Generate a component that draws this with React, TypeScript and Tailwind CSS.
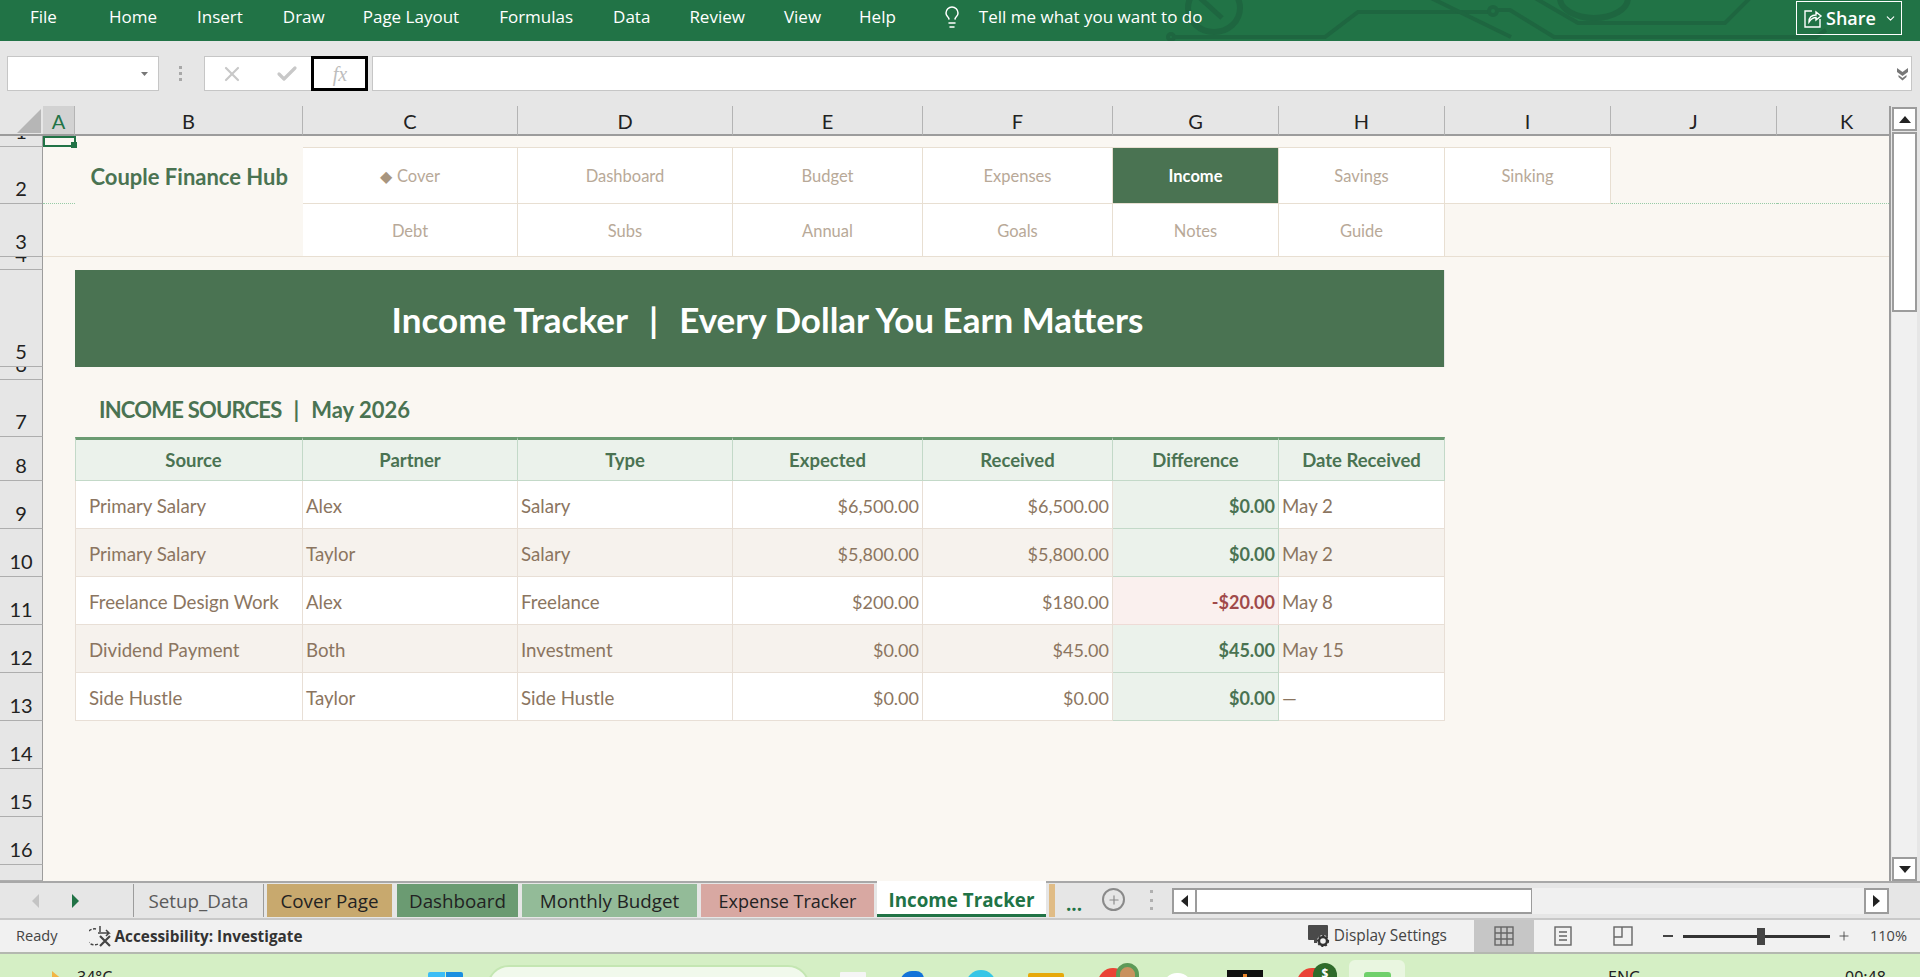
import React, { Fragment } from "react";
import { X, Check, Lightbulb, ChevronDown, Plus } from "lucide-react";

const menus = [
  ["File", "mr-[52px]"], ["Home", "mr-10"], ["Insert", "mr-10"], ["Draw", "mr-[38px]"], ["Page Layout", "mr-10"],
  ["Formulas", "mr-10"], ["Data", "mr-[39px]"], ["Review", "mr-[39px]"], ["View", "mr-[38px]"], ["Help", ""],
];

function RowHead({ n }: { n?: number }) {
  return (
    <div className="flex items-end justify-center overflow-hidden bg-[#e6e6e6] border-r border-b border-r-[#9c9c9c] border-b-[#aeaeae] pb-[5px] text-[20px] leading-none text-[#222]">
      {n}
    </div>
  );
}

function Blank({ cls = "" }: { cls?: string }) {
  return <div className={"bg-[#faf7f2] " + cls} />;
}

const nav1 = ["Cover", "Dashboard", "Budget", "Expenses", "Income", "Savings", "Sinking"];
const nav2 = ["Debt", "Subs", "Annual", "Goals", "Notes", "Guide"];
const cols = ["A", "B", "C", "D", "E", "F", "G", "H", "I", "J", "K"];
const heads = ["Source", "Partner", "Type", "Expected", "Received", "Difference", "Date Received"];
const rows = [
  { n: 9, s: "Primary Salary", p: "Alex", t: "Salary", e: "$6,500.00", r: "$6,500.00", d: "$0.00", date: "May 2" },
  { n: 10, s: "Primary Salary", p: "Taylor", t: "Salary", e: "$5,800.00", r: "$5,800.00", d: "$0.00", date: "May 2" },
  { n: 11, s: "Freelance Design Work", p: "Alex", t: "Freelance", e: "$200.00", r: "$180.00", d: "-$20.00", date: "May 8" },
  { n: 12, s: "Dividend Payment", p: "Both", t: "Investment", e: "$0.00", r: "$45.00", d: "$45.00", date: "May 15" },
  { n: 13, s: "Side Hustle", p: "Taylor", t: "Side Hustle", e: "$0.00", r: "$0.00", d: "$0.00", date: "—" },
];

function Sheet() {
  return (
    <div className="grid w-[1889px] shrink-0 overflow-hidden text-[#8b7560] grid-cols-[43px_32px_228px_215px_215px_190px_190px_166px_166px_166px_166px_112px] grid-rows-[30px_11px_57px_53px_13px_97px_13px_57px_44px_48px_48px_48px_48px_48px_48px_48px_48px_16px]">
      {/* column headers */}
      <div className="flex items-end justify-end bg-[#e6e6e6] border-b-2 border-[#9c9c9c] pr-[2px] pb-[1px]">
        <svg width="24" height="24" viewBox="0 0 24 24"><path d="M24 0V24H0Z" fill="#b6b6b6" /></svg>
      </div>
      {cols.map((c, i) => (
        <div
          key={c}
          className={
            "flex items-center justify-center border-b-2 border-b-[#9c9c9c] border-r border-r-[#b4b4b4] pt-[2px] text-[20px] leading-none " +
            (i === 0 ? "bg-[#d2d2d2] text-[#217346] " : "bg-[#e6e6e6] text-[#222] ") +
            (c === "K" ? "pl-[27px] border-r-0" : "")
          }
        >
          {c}
        </div>
      ))}

      {/* row 1 */}
      <RowHead n={1} />
      <div className="relative bg-[#faf7f2] border-2 border-[#217346] -mr-px">
        <div className="absolute right-[-3px] bottom-[-3px] h-[6px] w-[6px] bg-[#217346]" />
      </div>
      <Blank cls="col-span-10" />

      {/* row 2 */}
      <RowHead n={2} />
      <Blank cls="border-b border-dotted border-[#97cba6]" />
      <div className="row-span-2 flex items-start justify-end bg-[#faf7f2] pt-[16px] pr-[15px] text-[22px] font-bold leading-[28px] text-[#4a7352] border-b border-[#e8dfd2]">
        Couple Finance Hub
      </div>
      {nav1.map((t) => (
        <div
          key={t}
          className={
            "flex items-center justify-center border-b border-r border-t border-[#e8dfd2] pt-[1px] text-[16.5px] " +
            (t === "Income" ? "bg-[#4a7352] border-[#4a7352] font-bold text-white" : "bg-white text-[#b8a998]")
          }
        >
          {t === "Cover" && <span className="mr-[5px] text-[16px] leading-none text-[#a8957e]">◆</span>}
          {t}
        </div>
      ))}
      <Blank cls="border-b border-dotted border-[#97cba6]" />
      <Blank cls="border-b border-dotted border-[#97cba6]" />

      {/* row 3 */}
      <RowHead n={3} />
      <Blank cls="border-b border-[#e8dfd2]" />
      {nav2.map((t) => (
        <div key={t} className="flex items-center justify-center bg-white border-b border-r border-[#e8dfd2] pt-[2px] text-[16.5px] text-[#b8a998]">
          {t}
        </div>
      ))}
      <Blank cls="col-span-3 border-b border-[#e8dfd2]" />

      {/* row 4 */}
      <RowHead n={4} />
      <Blank cls="col-span-11" />

      {/* row 5 */}
      <RowHead n={5} />
      <Blank />
      <div className="col-span-7 mr-px flex items-center justify-center bg-[#4a7352] pl-[16px] pt-[1px] text-[35px] font-bold leading-none text-white">
        <span>Income Tracker</span>
        <span className="mx-[21px]">|</span>
        <span>Every Dollar You Earn Matters</span>
      </div>
      <Blank cls="col-span-3" />

      {/* row 6 */}
      <RowHead n={6} />
      <Blank cls="col-span-11" />

      {/* row 7 */}
      <RowHead n={7} />
      <Blank />
      <div className="col-span-7 flex items-center bg-[#faf7f2] pl-[24px] pt-[2px] text-[22px] font-bold leading-none text-[#4a7352] whitespace-pre">
        <span className="tracking-[-0.8px]">INCOME SOURCES</span>
        <span className="mx-[12px]">|</span>
        <span>May 2026</span>
      </div>
      <Blank cls="col-span-3" />

      {/* row 8 */}
      <RowHead n={8} />
      <Blank />
      {heads.map((h, i) => (
        <div
          key={h}
          className={
            "flex items-center justify-center bg-[#ebf2eb] border-t-[3px] border-t-[#6b9b72] border-r border-b border-r-[#c3d9c8] border-b-[#c3d9c8] pt-[1px] text-[18.5px] font-bold text-[#4a7352] " +
            (i === 0 ? "border-l border-l-[#c3d9c8] pl-[9px]" : "")
          }
        >
          {h}
        </div>
      ))}
      <Blank cls="col-span-3" />

      {/* rows 9..13 */}
      {rows.map((r) => {
        const alt = r.n % 2 === 0;
        const base = "flex items-center border-r border-b border-[#e8dfd6] pt-[3px] " + (alt ? "bg-[#f6f2ed] " : "bg-white ");
        const neg = r.d.startsWith("-");
        return (
          <Fragment key={r.n}>
            <RowHead n={r.n} />
            <Blank />
            <div className={base + "border-l pl-[13px] text-[18.7px]"}>{r.s}</div>
            <div className={base + "pl-[3px] text-[18.7px]"}>{r.p}</div>
            <div className={base + "pl-[3px] text-[18.7px]"}>{r.t}</div>
            <div className={base + "justify-end pr-[3px] text-[18px]"}>{r.e}</div>
            <div className={base + "justify-end pr-[3px] text-[18px]"}>{r.r}</div>
            <div
              className={
                "flex items-center justify-end border-r border-b pt-[3px] pr-[3px] text-[18px] font-bold " +
                (neg ? "bg-[#faf0ee] border-[#eedbd6] text-[#a04a4a]" : "bg-[#ebf2eb] border-[#c3d9c8] text-[#4a7352]")
              }
            >
              {r.d}
            </div>
            <div className={base + "pl-[3px] text-[18.7px]"}>{r.date}</div>
            <Blank cls="col-span-3" />
          </Fragment>
        );
      })}

      {[14, 15, 16].map((n) => (
        <Fragment key={n}>
          <RowHead n={n} />
          <Blank cls="col-span-11" />
        </Fragment>
      ))}
      <RowHead />
      <Blank cls="col-span-11" />
    </div>
  );
}

function Circuit() {
  return (
    <svg className="absolute left-0 top-0 pointer-events-none" width="1920" height="41" fill="none" stroke="#1e6640" strokeWidth="4">
      <ellipse cx="1214" cy="8" rx="26" ry="24" strokeWidth="6" />
      <path d="M1200 -2L1222 18" strokeWidth="5" />
      <circle cx="1171" cy="37" r="3" />
      <path d="M1174 37H1325L1358 12H1490" />
      <circle cx="1493" cy="11" r="4" />
      <path d="M1497 10H1510L1554 37H1816L1826 30" />
      <path d="M1431 -2L1511 37" />
      <path d="M1560 -2A34 20 0 0 0 1628 -2" strokeWidth="6" />
      <path d="M1535 -2L1578 23H1725L1750 -2" />
    </svg>
  );
}

function TitleBar() {
  return (
    <div className="relative flex h-[41px] shrink-0 items-start bg-[#217346] font-['Open_Sans',sans-serif] text-[17px] text-white">
      <Circuit />
      <div className="relative flex items-center pl-[30px] pt-[5px] leading-[24px]">
        {menus.map(([m, c]) => (
          <span key={m} className={c}>{m}</span>
        ))}
        <Lightbulb className="ml-[44px]" size={24} strokeWidth={1.5} />
        <span className="ml-[15px]">Tell me what you want to do</span>
      </div>
      <div className="relative ml-auto mr-[18px] mt-[1px] flex h-[34px] w-[106px] items-center border border-white pl-[6px]">
        <svg width="20" height="22" viewBox="0 0 20 22" fill="none" stroke="white" strokeWidth="1.4">
          <path d="M9 4H2V20H17V12" />
          <path d="M6 15C6 10 9 8 13 8V5L18 9L13 13V10.5C10 10.5 8 12 6 15Z" />
        </svg>
        <span className="ml-[3px] text-[18px] font-semibold">Share</span>
        <ChevronDown className="ml-[8px]" size={13} strokeWidth={2} />
      </div>
    </div>
  );
}

function FormulaBar() {
  return (
    <div className="flex h-[65px] shrink-0 items-start bg-[#e6e6e6] pt-[15px] pl-[7px]">
      <div className="flex h-[35px] w-[152px] items-center justify-end border border-[#c6c6c6] bg-white pr-[10px]">
        <svg width="7" height="4"><path d="M0 0H7L3.5 4Z" fill="#777" /></svg>
      </div>
      <div className="ml-[20px] flex h-[35px] flex-col justify-center gap-[3px]">
        <span className="h-[3px] w-[3px] bg-[#a8a8a8]" />
        <span className="h-[3px] w-[3px] bg-[#a8a8a8]" />
        <span className="h-[3px] w-[3px] bg-[#a8a8a8]" />
      </div>
      <div className="ml-[22px] flex h-[35px] w-[164px] items-stretch border border-[#c6c6c6] bg-white">
        <div className="flex w-[107px] items-center pl-[15px] text-[#c8c8c8]">
          <X size={24} strokeWidth={2.2} />
          <Check className="ml-[31px]" size={24} strokeWidth={3.2} />
        </div>
        <div className="-m-px flex flex-1 items-center justify-center border-[3px] border-black pl-px font-['Liberation_Serif',serif] text-[20px] italic text-[#bdbdbd]">
          fx
        </div>
      </div>
      <div className="ml-[4px] flex h-[35px] w-[1540px] items-center justify-end border border-[#c6c6c6] bg-white pr-[3px]">
        <svg width="11" height="14" viewBox="0 0 11 14" fill="#777"><path d="M0 1L5.5 5L11 1V5L5.5 9L0 5Z" /><path d="M1.5 8L5.5 11L9.5 8V10L5.5 13.5L1.5 10Z" /></svg>
      </div>
    </div>
  );
}

function VScroll() {
  return (
    <div className="flex w-[31px] shrink-0 flex-col border-l-2 border-[#9c9c9c] bg-[#e6e6e6] pl-px pr-[3px] pt-px">
      <div className="flex h-6 items-center justify-center border-2 border-[#9c9c9c] bg-white">
        <svg width="12" height="7"><path d="M6 0L12 7H0Z" fill="#222" /></svg>
      </div>
      <div className="mt-px h-[180px] border-2 border-[#9c9c9c] bg-white" />
      <div className="flex-1 bg-[#f0f0f0]" />
      <div className="flex h-6 items-center justify-center border-2 border-[#9c9c9c] bg-white">
        <svg width="12" height="7"><path d="M0 0H12L6 7Z" fill="#222" /></svg>
      </div>
    </div>
  );
}

const tabs = [
  ["Cover Page", "w-[125px] mr-[5px] bg-[#c8a96e]"],
  ["Dashboard", "w-[121px] mr-[4px] bg-[#6b9b72]"],
  ["Monthly Budget", "w-[175px] mr-[4px] bg-[#93bb98]"],
  ["Expense Tracker", "w-[173px] mr-[3px] bg-[#d8a8a2] text-[18px]"],
];

function TabBar() {
  return (
    <div className="flex h-[39px] shrink-0 items-start border-t-2 border-b-2 border-t-[#a8a8a8] border-b-[#c8c8c8] bg-[#e6e6e6] font-['Open_Sans',sans-serif] text-[18.8px] text-[#222]">
      <div className="flex h-[33px] w-[133px] items-center pl-[32px] pt-[2px]">
        <svg width="7" height="14"><path d="M7 0V14L0 7Z" fill="#c4c4c4" /></svg>
        <svg className="ml-[33px]" width="7" height="14"><path d="M0 0V14L7 7Z" fill="#217346" /></svg>
      </div>
      <div className="mt-[1px] mr-[3px] flex h-[33px] w-[131px] items-center justify-center border-x border-[#9c9c9c] pt-[1px] text-[#5a5a5a]">Setup_Data</div>
      {tabs.map(([t, c]) => (
        <div key={t} className={"mt-[1px] flex h-[33px] items-center justify-center pt-[1px] " + c}>{t}</div>
      ))}
      <div className="-mt-[2px] flex h-[36px] w-[169px] items-center justify-center border-b-[3px] border-[#217346] bg-white pt-[5px] font-bold text-[#217346]">
        Income Tracker
      </div>
      <div className="ml-[3px] mt-[1px] h-[33px] w-[6px] bg-[#e0bc86]" />
      <div className="ml-[11px] mt-[1px] flex h-[33px] w-[28px] items-end pb-[3px] font-bold leading-none text-[#217346]">...</div>
      <div className="ml-[8px] mt-[5px] flex h-[23px] w-[23px] items-center justify-center rounded-full border-2 border-[#8a8a8a] text-[#8a8a8a]">
        <Plus size={14} strokeWidth={2} />
      </div>
      <div className="ml-[25px] mt-[7px] flex h-[20px] flex-col justify-between">
        <span className="h-[3px] w-[3px] bg-[#b0b0b0]" />
        <span className="h-[3px] w-[3px] bg-[#b0b0b0]" />
        <span className="h-[3px] w-[3px] bg-[#b0b0b0]" />
      </div>
      <div className="ml-[19px] mt-[5px] flex h-[26px] w-[717px] items-stretch bg-[#f0f0f0]">
        <div className="flex w-[25px] items-center justify-center border-2 border-[#9c9c9c] bg-white">
          <svg width="7" height="12"><path d="M7 0V12L0 6Z" fill="#222" /></svg>
        </div>
        <div className="w-[335px] border-y-2 border-r border-[#9c9c9c] bg-white" />
        <div className="flex-1" />
        <div className="flex w-[25px] items-center justify-center border-2 border-[#9c9c9c] bg-white">
          <svg width="7" height="12"><path d="M0 0V12L7 6Z" fill="#222" /></svg>
        </div>
      </div>
    </div>
  );
}

function StatusBar() {
  return (
    <div className="flex h-[34px] shrink-0 items-stretch border-b-2 border-[#b4b8b0] bg-[#f1f1f1] font-['Open_Sans',sans-serif] text-[14.6px] text-[#444]">
      <span className="ml-[16px] self-center">Ready</span>
      <svg className="ml-[31px] self-center" width="25" height="24" viewBox="0 0 25 24" fill="none" stroke="#444" strokeWidth="1.5">
        <path d="M11 2V8" />
        <path d="M7 5A8 8 0 1 0 9 20" strokeDasharray="3 1.5" />
        <path d="M9 9H20L17 6M20 9L17 12" />
        <path d="M11 12L21 22M21 12L11 22" strokeWidth="2.2" />
      </svg>
      <span className="ml-px self-center text-[15.3px] font-bold text-[#333]">Accessibility: Investigate</span>
      <svg className="ml-auto self-center" width="24" height="24" viewBox="0 0 24 24">
        <rect x="1" y="1" width="20" height="15" rx="1" fill="#4a4a4a" />
        <rect x="7" y="16" width="5" height="3" fill="#4a4a4a" />
        <circle cx="16" cy="17" r="6" fill="#f1f1f1" />
        <circle cx="16" cy="17" r="4" fill="none" stroke="#333" strokeWidth="2.4" />
        <circle cx="16" cy="17" r="5.4" fill="none" stroke="#333" strokeWidth="1.4" strokeDasharray="2 2" />
      </svg>
      <span className="ml-[3px] self-center text-[15.4px]">Display Settings</span>
      <div className="ml-[27px] flex w-[60px] items-center justify-center bg-[#c6c6c6]">
        <svg width="20" height="20" viewBox="0 0 20 20" fill="none" stroke="#666" strokeWidth="1.4">
          <rect x="1" y="1" width="18" height="18" />
          <path d="M1 7H19M1 13H19M7 1V19M13 1V19" />
        </svg>
      </div>
      <svg className="ml-[19px] self-center" width="20" height="20" viewBox="0 0 20 20" fill="none" stroke="#666" strokeWidth="1.4">
        <rect x="2" y="1" width="16" height="18" />
        <path d="M6 6H14M6 10H14M6 14H14" />
      </svg>
      <svg className="ml-[40px] self-center" width="20" height="20" viewBox="0 0 20 20" fill="none" stroke="#666" strokeWidth="1.4">
        <rect x="1" y="1" width="18" height="18" />
        <path d="M1 11H9V1" />
      </svg>
      <span className="ml-[30px] self-center h-[1.5px] w-[10px] bg-[#444]" />
      <div className="relative ml-[10px] h-[3px] w-[147px] self-center bg-[#333]">
        <div className="absolute left-[74px] top-[-7px] h-[17px] w-[8px] bg-[#444]" />
      </div>
      <span className="ml-[7px] self-center text-[#444]"><Plus size={14} strokeWidth={1.5} /></span>
      <span className="ml-[19px] mr-[13px] self-center">110%</span>
    </div>
  );
}

function Taskbar() {
  return (
    <div className="flex h-[23px] shrink-0 items-start overflow-hidden bg-[#d5efc5] font-['Noto_Sans',sans-serif] text-[16px] leading-[20px] text-[#222]">
      <svg className="ml-[52px] mt-[17px]" width="12" height="12"><path d="M0 0L12 10V12H0Z" fill="#f2b544" /></svg>
      <span className="ml-[13px] mt-[13px] w-[36px]">34°C</span>
      <div className="ml-[315px] mt-[18px] grid w-[35px] grid-cols-2 gap-[1px]">
        <span className="h-[12px] rounded-tl-[2px] bg-[#3bbdf5]" />
        <span className="h-[12px] rounded-tr-[2px] bg-[#1a8fe0]" />
      </div>
      <div className="ml-[24px] mt-[11px] h-[30px] w-[323px] rounded-t-[22px] border-2 border-[#c4e6b2] bg-[#f1f9ec]" />
      <span className="ml-[30px] mt-[18px] h-[12px] w-[26px] rounded-[1px] bg-[#f5f5f5]" />
      <span className="ml-[34px] mt-[17px] h-[14px] w-[24px] rounded-tl-[12px] rounded-tr-[8px] bg-[#1273d8]" />
      <span className="ml-[42px] mt-[16px] h-[30px] w-[30px] rounded-full bg-[#36c6e6]" />
      <span className="ml-[32px] mt-[19px] h-[14px] w-[36px] rounded-t-[2px] bg-[#e6a90a]" />
      <span className="ml-[34px] mt-[14px] h-[30px] w-[30px] rounded-full bg-[#ea4335]" />
      <span className="-ml-[12px] mt-[9px] h-[26px] w-[23px] rounded-full border-[4px] border-[#5d9a58] bg-[#c9925f]" />
      <span className="ml-[24px] mt-[19px] h-[14px] w-[29px] rounded-t-full bg-white" />
      <div className="ml-[35px] mt-[16px] flex h-[14px] w-[36px] justify-center bg-[#111]">
        <span className="mt-[4px] h-[4px] w-[4px] bg-[#e8832a]" />
      </div>
      <span className="ml-[34px] mt-[14px] h-[30px] w-[33px] rounded-full bg-[#ea4335]" />
      <span className="-ml-[17px] mt-[9px] flex h-[30px] w-[24px] justify-center rounded-full bg-[#2f6b2a] text-[12px] font-bold leading-[22px] text-white">$</span>
      <div className="ml-[12px] mt-[6px] flex h-[30px] w-[56px] justify-center rounded-t-[6px] bg-[#e9f6e0] pt-[12px]">
        <span className="h-[12px] w-[27px] rounded-t-[3px] bg-[#6fd06a]" />
      </div>
      <span className="ml-[203px] mt-[13px] w-[34px]">ENG</span>
      <span className="ml-[203px] mt-[13px] w-[46px]">00:48</span>
    </div>
  );
}

export default function App() {
  return (
    <div className="flex h-[977px] w-[1920px] flex-col overflow-hidden bg-[#e6e6e6] font-[Lato,sans-serif]">
      <TitleBar />
      <FormulaBar />
      <div className="flex h-[775px] shrink-0">
        <Sheet />
        <VScroll />
      </div>
      <TabBar />
      <StatusBar />
      <Taskbar />
    </div>
  );
}
